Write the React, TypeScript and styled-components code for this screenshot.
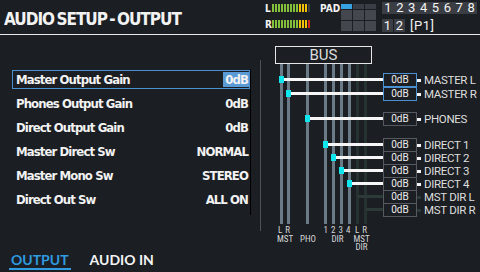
import React from 'react';
import styled, { createGlobalStyle } from 'styled-components';

const GlobalStyle = createGlobalStyle`
  html, body { margin: 0; padding: 0; background: #1b1e23; }
`;

const LIST_FONT = `'DejaVu Sans Condensed', 'DejaVu Sans', sans-serif`;

const Screen = styled.div`
  width: 480px;
  height: 272px;
  background: #1b1e23;
  color: #f2f2f2;
  display: flex;
  flex-direction: column;
  overflow: hidden;
`;

const Header = styled.div`
  height: 34px;
  border-bottom: 1px solid #e8e8e8;
  display: flex;
  align-items: flex-start;
`;

const Title = styled.div`
  font-family: ${LIST_FONT};
  font-weight: 700;
  font-size: 17px;
  line-height: 20px;
  letter-spacing: -1px;
  word-spacing: -2px;
  margin: 9px 0 0 4px;
  width: 261px;
  white-space: nowrap;
`;

const Meters = styled.div`
  display: flex;
  flex-direction: column;
  gap: 8px;
  margin-top: 4px;
  width: 55px;
`;

const MeterRow = styled.div`
  display: flex;
  align-items: center;
  height: 8px;
`;

const MeterLabel = styled.span`
  font-family: ${LIST_FONT};
  font-weight: 700;
  font-size: 10px;
  width: 7px;
`;

const Bar = styled.span<{ $c: string }>`
  width: 2px;
  height: 8px;
  margin-right: 1px;
  background: ${(p) => p.$c};
`;

const PadLabel = styled.div`
  font-family: ${LIST_FONT};
  font-weight: 700;
  font-size: 10px;
  margin-top: 3px;
  width: 21px;
`;

const PadGrid = styled.div`
  display: grid;
  grid-template-columns: repeat(3, 11px);
  grid-template-rows: 5px 10px 10px;
  gap: 1px;
  margin-top: 4px;
  width: 41px;
`;

const PadCell = styled.span<{ $on?: boolean; $top?: boolean }>`
  background: ${(p) => (p.$on ? '#37a2e2' : p.$top ? '#3a3d43' : '#44474e')};
`;

const Slots = styled.div`
  display: flex;
  flex-direction: column;
  gap: 5px;
  margin-top: 2px;
`;

const SlotStrip = styled.div`
  display: flex;
  background: #3a3d43;
  height: 12px;
  width: 95px;
`;

const SlotRow2 = styled.div`
  display: flex;
  align-items: center;
  gap: 1px;
  height: 13px;
`;

const Slot = styled.span<{ $boxed?: boolean }>`
  width: ${(p) => (p.$boxed ? '11px' : '11.9px')};
  height: ${(p) => (p.$boxed ? '13px' : '12px')};
  background: ${(p) => (p.$boxed ? '#3a3d43' : 'transparent')};
  font-family: Roboto, sans-serif;
  font-size: 13px;
  line-height: ${(p) => (p.$boxed ? '13px' : '12px')};
  text-align: center;
  color: #f4f4f4;
`;

const Patch = styled.span`
  font-family: Roboto, sans-serif;
  font-size: 13px;
  margin-left: 4px;
  letter-spacing: 0.5px;
`;

const Body = styled.div`
  display: flex;
  height: 215px;
`;

const ListPanel = styled.div`
  width: 251px;
  display: flex;
  padding-top: 32px;
  box-sizing: border-box;
`;

const List = styled.div`
  margin-left: 12px;
  width: 238px;
`;

const Track = styled.div`
  width: 1px;
  height: 146px;
  margin-top: 2px;
  background: #000;
`;

const Row = styled.div`
  height: 24px;
  display: flex;
  align-items: center;
`;

const Item = styled.div<{ $sel?: boolean }>`
  flex: 1;
  height: 19px;
  box-sizing: border-box;
  border: 1px solid ${(p) => (p.$sel ? '#4a90d0' : 'transparent')};
  display: flex;
  align-items: center;
  justify-content: space-between;
  padding: 0 0 0 3px;
  font-family: ${LIST_FONT};
  font-weight: 700;
  font-size: 13px;
  letter-spacing: -0.9px;
`;

const Value = styled.span<{ $sel?: boolean }>`
  background: ${(p) => (p.$sel ? '#5b9bd5' : 'transparent')};
  height: 15px;
  line-height: 15px;
  padding: 0 1px 0 2px;
`;

const RoutePanel = styled.div`
  position: relative;
  flex: 1;
`;

const Wires = styled.svg`
  position: absolute;
  left: 0;
  top: 0;
  overflow: visible;
`;

const BusBox = styled.div`
  position: relative;
  margin: 11px 0 0 24px;
  width: 97px;
  height: 18px;
  box-sizing: border-box;
  border: 1px solid #e6e6e6;
  text-align: center;
  font-family: Roboto, sans-serif;
  font-size: 15px;
  line-height: 16px;
  color: #dcdcdc;
`;

const OutColumn = styled.div`
  position: relative;
  margin: 9px 0 0 132px;
`;

const OutRow = styled.div<{ $gap: number }>`
  display: flex;
  align-items: center;
  margin-top: ${(p) => p.$gap}px;
`;

const OutBox = styled.div<{ $tone: 'active' | 'normal' }>`
  width: 34px;
  height: 14px;
  box-sizing: border-box;
  border: 1px solid ${(p) => (p.$tone === 'active' ? '#4a90d0' : '#56595f')};
  font-family: Roboto, sans-serif;
  font-size: 10px;
  line-height: 12px;
  text-align: center;
  color: #ececec;
`;

const Connector = styled.span<{ $dim?: boolean }>`
  width: 4px;
  height: 3px;
  margin-right: 3px;
  background: ${(p) => (p.$dim ? '#2c3a37' : '#f4f4f4')};
`;

const OutLabel = styled.span`
  font-family: Roboto, sans-serif;
  font-size: 11.5px;
  letter-spacing: -0.3px;
  color: #dedede;
  white-space: nowrap;
`;

const Tabs = styled.div`
  flex: 1;
  display: flex;
  align-items: flex-start;
  gap: 17px;
  padding: 3px 0 0 9px;
`;

const Tab = styled.span<{ $on?: boolean }>`
  font-family: Lato, sans-serif;
  font-weight: 700;
  font-size: 14px;
  line-height: 14px;
  padding: 0 2px 1px;
  color: ${(p) => (p.$on ? '#2f9be0' : '#f4f4f4')};
  border-bottom: 2px solid ${(p) => (p.$on ? '#2f9be0' : 'transparent')};
`;

const params = [
  { name: 'Master Output Gain', value: '0dB' },
  { name: 'Phones Output Gain', value: '0dB' },
  { name: 'Direct Output Gain', value: '0dB' },
  { name: 'Master Direct Sw', value: 'NORMAL' },
  { name: 'Master Mono Sw', value: 'STEREO' },
  { name: 'Direct Out Sw', value: 'ALL ON' },
];

const outs: { label: string; gap: number; tone: 'active' | 'normal'; dim?: boolean }[] = [
  { label: 'MASTER L', gap: 0, tone: 'active' },
  { label: 'MASTER R', gap: 0, tone: 'active' },
  { label: 'PHONES', gap: 11, tone: 'normal' },
  { label: 'DIRECT 1', gap: 12, tone: 'normal' },
  { label: 'DIRECT 2', gap: -1, tone: 'normal' },
  { label: 'DIRECT 3', gap: -1, tone: 'normal' },
  { label: 'DIRECT 4', gap: -1, tone: 'normal' },
  { label: 'MST DIR L', gap: -1, tone: 'normal', dim: true },
  { label: 'MST DIR R', gap: -1, tone: 'normal', dim: true },
];

const litBus = [281.5, 288.5, 307.5, 325.5, 333.5, 341.5, 349.5];
const dimBus = [357.5, 365.5];
const taps = [
  [281.5, 79.5], [288.5, 93.5], [307.5, 118.5], [325.5, 144.5],
  [333.5, 157.5], [341.5, 170.5], [349.5, 183.5],
];
const dimTaps = [[357.5, 196.5], [365.5, 209.5]];

const meter = (last: string) => [
  ...Array(9).fill('#84c03c'),
  ...Array(3).fill('#f2c200'),
  last,
];

// bus captions under the wires
const axis = {
  fontFamily: 'Roboto, sans-serif',
  fontSize: 9,
  fontStretch: 'condensed',
  fill: '#d6d6d6',
  textAnchor: 'middle' as const,
};

export default function App() {
  return (
    <Screen>
      <GlobalStyle />
      <Header>
        <Title>AUDIO SETUP - OUTPUT</Title>
        <Meters>
          {[['L', '#3a3d43'], ['R', '#d4261c']].map(([ch, last]) => (
            <MeterRow key={ch}>
              <MeterLabel>{ch}</MeterLabel>
              {meter(last).map((c, i) => <Bar key={i} $c={c} />)}
            </MeterRow>
          ))}
        </Meters>
        <PadLabel>PAD</PadLabel>
        <PadGrid>
          {Array.from({ length: 9 }, (_, i) => (
            <PadCell key={i} $on={i === 0} $top={i < 3} />
          ))}
        </PadGrid>
        <Slots>
          <SlotStrip>
            {[1, 2, 3, 4, 5, 6, 7, 8].map((n) => <Slot key={n}>{n}</Slot>)}
          </SlotStrip>
          <SlotRow2>
            <Slot $boxed>1</Slot>
            <Slot $boxed>2</Slot>
            <Patch>[P1]</Patch>
          </SlotRow2>
        </Slots>
      </Header>
      <Body>
        <ListPanel>
          <List>
            {params.map((p, i) => (
              <Row key={p.name}>
                <Item $sel={i === 0}>
                  <span>{p.name}</span>
                  <Value $sel={i === 0}>{p.value}</Value>
                </Item>
              </Row>
            ))}
          </List>
          <Track />
        </ListPanel>
        <RoutePanel>
          <Wires width="229" height="215" viewBox="251 35 229 215">
            <line x1="260.5" y1="60" x2="260.5" y2="231" stroke="#4c5057" strokeWidth="1" />
            {litBus.map((x) => (
              <line key={x} x1={x} y1="64" x2={x} y2="224" stroke="#6b7a87" strokeWidth="3" />
            ))}
            {dimBus.map((x) => (
              <line key={x} x1={x} y1="64" x2={x} y2="224" stroke="#25322f" strokeWidth="3" />
            ))}
            {dimTaps.map(([x, y]) => (
              <line key={y} x1={x} y1={y} x2="383" y2={y} stroke="#2c3a37" strokeWidth="3" />
            ))}
            {taps.map(([x, y]) => (
              <g key={y}>
                <line x1={x} y1={y} x2="383" y2={y} stroke="#f6f6f6" strokeWidth="3" />
                <rect x={x - 2.5} y={y - 3.5} width="5" height="7" fill="#0fe6ee" />
              </g>
            ))}
            <g style={axis}>
              <text x="285.5" y="233" letterSpacing="3">LR</text>
              <text x="338.5" y="233" letterSpacing="3">1234</text>
              <text x="362.5" y="233" letterSpacing="3">LR</text>
              <text x="285" y="241.5">MST</text>
              <text x="308" y="241.5">PHO</text>
              <text x="337.5" y="241.5">DIR</text>
              <text x="361.5" y="241.5">MST</text>
              <text x="361.5" y="250">DIR</text>
            </g>
          </Wires>
          <BusBox>BUS</BusBox>
          <OutColumn>
            {outs.map((o) => (
              <OutRow key={o.label} $gap={o.gap}>
                <OutBox $tone={o.tone}>0dB</OutBox>
                <Connector $dim={o.dim} />
                <OutLabel>{o.label}</OutLabel>
              </OutRow>
            ))}
          </OutColumn>
        </RoutePanel>
      </Body>
      <Tabs>
        <Tab $on>OUTPUT</Tab>
        <Tab>AUDIO IN</Tab>
      </Tabs>
    </Screen>
  );
}
